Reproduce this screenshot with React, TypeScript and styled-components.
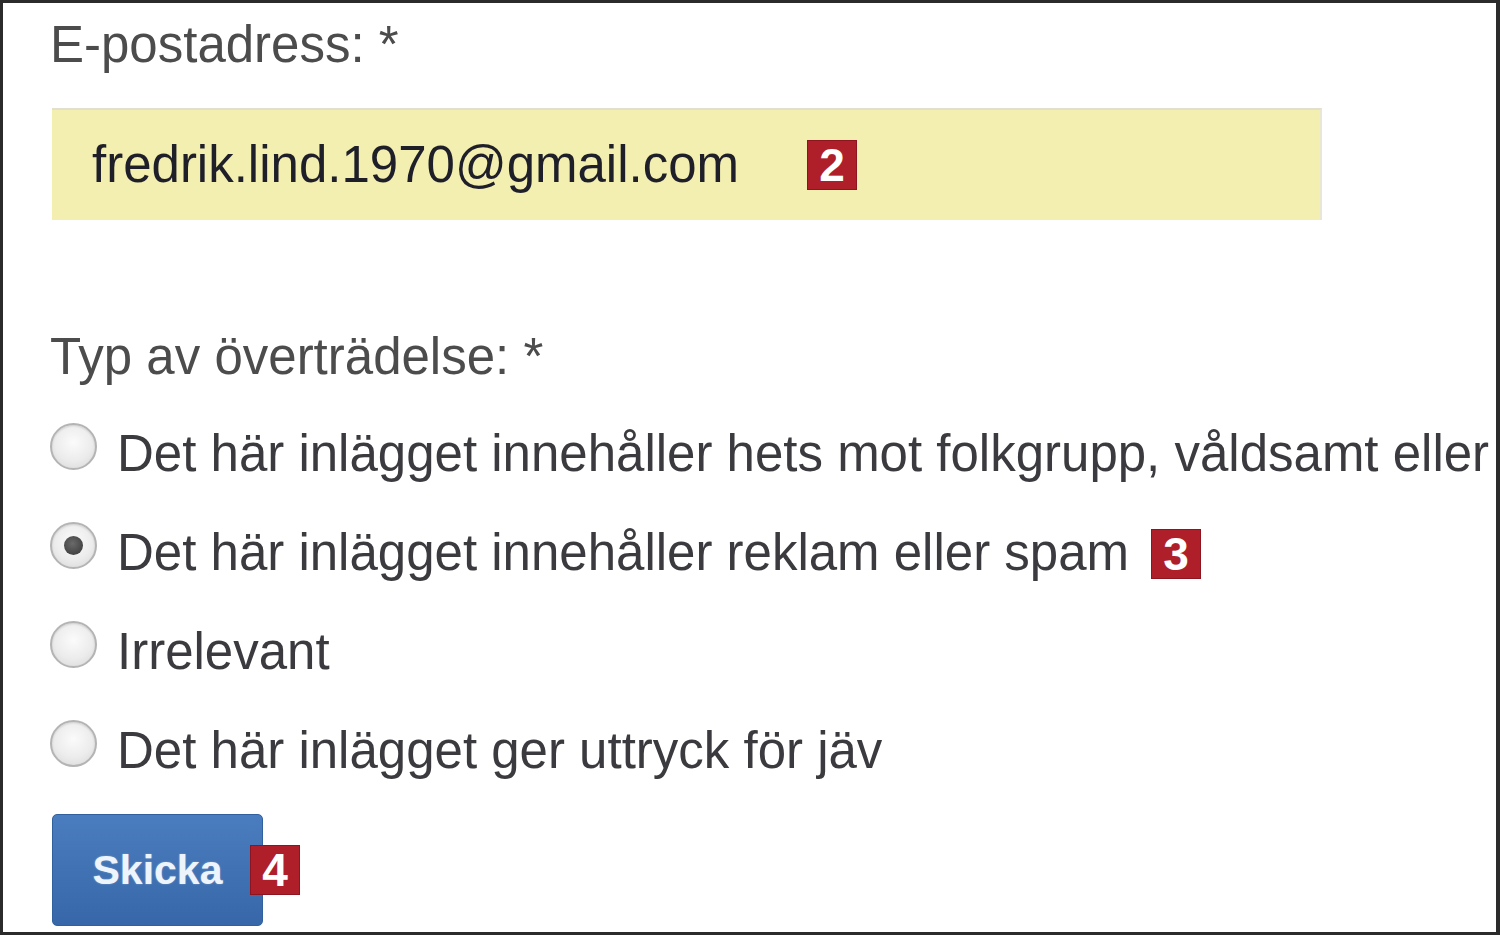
import React from "react";
import styled, { createGlobalStyle } from "styled-components";

const GlobalStyle = createGlobalStyle`
  html, body { margin: 0; padding: 0; background: #ffffff; }
  body { font-family: "Liberation Sans", Arial, sans-serif; }
  * { box-sizing: border-box; }
`;

const Frame = styled.div`
  width: 1500px;
  height: 935px;
  border: 3px solid #2b2b2b;
  border-right-width: 4px;
  background: #ffffff;
  overflow: hidden;
  padding: 13px 0 0 47px;
  font-family: "Liberation Sans", Arial, sans-serif;
`;

const Form = styled.form`
  display: flex;
  flex-direction: column;
  align-items: flex-start;
  width: 1600px;
`;

const FieldLabel = styled.div<{ $gap?: number }>`
  font-size: 51px;
  line-height: 1.15;
  color: #4c4c4c;
  margin-top: ${(p) => p.$gap ?? 0}px;
  white-space: nowrap;
`;

const EmailBox = styled.div`
  margin-top: 33px;
  margin-left: 2px;
  width: 1270px;
  height: 112px;
  background: #f3efb0;
  border-top: 2px solid #e2e0cc;
  border-right: 2px solid #e8e6d6;
  display: flex;
  align-items: center;
  padding-left: 40px;
`;

const EmailText = styled.span`
  font-size: 51px;
  line-height: 112px;
  color: #1f1f2a;
  white-space: nowrap;
`;

const Badge = styled.span<{ $ml: number }>`
  display: inline-flex;
  align-items: center;
  justify-content: center;
  flex: 0 0 auto;
  width: 50px;
  height: 50px;
  margin-left: ${(p) => p.$ml}px;
  background: #ae1f2a;
  box-shadow: inset 0 0 0 1px #8e1520;
  color: #ffffff;
  font-family: "Liberation Sans", Arial, sans-serif;
  font-weight: 700;
  font-size: 46px;
  line-height: 50px;
  position: relative;
  z-index: 1;
`;

const Options = styled.div`
  margin-top: 19px;
  display: flex;
  flex-direction: column;
`;

const OptionRow = styled.label`
  display: flex;
  align-items: center;
  height: 99px;
  white-space: nowrap;
  cursor: pointer;
`;

const Radio = styled.input.attrs({ type: "radio" })`
  appearance: none;
  -webkit-appearance: none;
  margin: 0 20px 16px 0;
  width: 47px;
  height: 47px;
  border-radius: 50%;
  border: 2px solid #b4b4b4;
  background: radial-gradient(circle at 50% 40%, #fbfbfb 0%, #ececec 55%, #d6d6d6 100%);
  box-shadow: inset 0 1px 2px rgba(0, 0, 0, 0.12);
  flex: 0 0 auto;
  display: grid;
  place-items: center;

  &:checked::after {
    content: "";
    width: 19px;
    height: 19px;
    border-radius: 50%;
    background: radial-gradient(circle at 45% 40%, #6a6a6a 0%, #444 70%);
  }
`;

const OptionText = styled.span`
  font-size: 51px;
  line-height: 1.15;
  color: #3a3a3f;
`;

const ButtonRow = styled.div`
  margin-top: 13px;
  margin-left: 2px;
  display: flex;
  align-items: center;
`;

const SubmitButton = styled.button`
  width: 211px;
  height: 112px;
  border: 1px solid #30609e;
  border-radius: 5px;
  background: linear-gradient(#4a7dbf, #3767a8);
  color: #eef4fb;
  font-family: "Liberation Sans", Arial, sans-serif;
  font-weight: 700;
  font-size: 41px;
  text-shadow: 0 0 2px rgba(255, 255, 255, 0.35);
  padding: 0;
  cursor: pointer;
`;

const options = [
  { text: "Det här inlägget innehåller hets mot folkgrupp, våldsamt eller", checked: false, badge: null },
  { text: "Det här inlägget innehåller reklam eller spam", checked: true, badge: "3" },
  { text: "Irrelevant", checked: false, badge: null },
  { text: "Det här inlägget ger uttryck för jäv", checked: false, badge: null },
];

export default function App() {
  return (
    <>
      <GlobalStyle />
      <Frame>
        <Form onSubmit={(e) => e.preventDefault()}>
          <FieldLabel>E-postadress: *</FieldLabel>
          <EmailBox>
            <EmailText>fredrik.lind.1970@gmail.com</EmailText>
            <Badge $ml={68}>2</Badge>
          </EmailBox>
          <FieldLabel $gap={108}>Typ av överträdelse: *</FieldLabel>
          <Options>
            {options.map((o, i) => (
              <OptionRow key={i}>
                <Radio name="typ" defaultChecked={o.checked} />
                <OptionText>{o.text}</OptionText>
                {o.badge && <Badge $ml={22}>{o.badge}</Badge>}
              </OptionRow>
            ))}
          </Options>
          <ButtonRow>
            <SubmitButton type="submit">Skicka</SubmitButton>
            <Badge $ml={-13}>4</Badge>
          </ButtonRow>
        </Form>
      </Frame>
    </>
  );
}
